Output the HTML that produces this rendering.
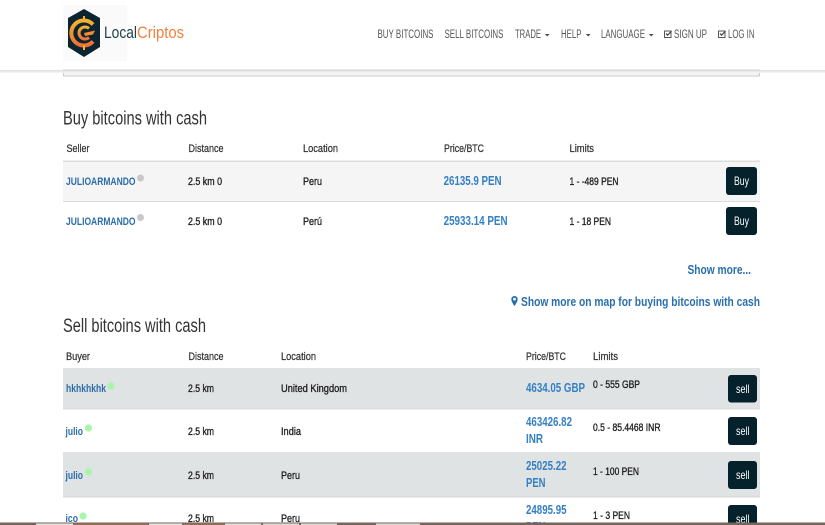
<!DOCTYPE html>
<html><head><meta charset="utf-8"><title>LocalCriptos</title>
<style>
html,body{margin:0;padding:0;background:#fff;width:825px;height:525px;overflow:hidden}
svg{display:block;font-family:"Liberation Sans",sans-serif}
.n{font-size:11.500px;fill:#555}
.h{font-size:11px;fill:#333;stroke:#333;stroke-width:.25px}
.t{font-size:11px;fill:#222;stroke:#222;stroke-width:.35px}
.l{font-size:11px;font-weight:bold;fill:#2a6da8}
.p{font-size:13px;font-weight:bold;fill:#3580c4}
.m{font-size:13px;font-weight:bold;fill:#2a6fad}
.g{font-size:19px;fill:#333}
.b{font-size:12px;fill:#fff}
</style></head><body>
<svg width="825" height="525" viewBox="0 0 825 525" xmlns="http://www.w3.org/2000/svg">
<defs>
<linearGradient id="sh" x1="0" y1="0" x2="0" y2="1"><stop offset="0" stop-color="#d8d8d8"/><stop offset="1" stop-color="#f7f7f7"/></linearGradient>
<linearGradient id="c" x1="0" y1="0" x2="0" y2="1"><stop offset="0" stop-color="#f8b030"/><stop offset="1" stop-color="#f26f36"/></linearGradient>
</defs>
<rect width="825" height="525" fill="#fff"/>
<!-- top box -->
<rect x="63.500" y="70" width="696" height="6" fill="#f4f4f4" stroke="#ccc"/>
<rect x="0" y="70" width="825" height="3" fill="url(#sh)" opacity=".9"/>
<!-- logo -->
<rect x="63" y="5" width="64" height="56" fill="#fafafa"/>
<path d="M84 9L100 18V47L84 57L68 47V18Z" fill="#0b2530"/>
<path d="M93 24.500A12.500 12.500 0 1 0 93 41.500" fill="none" stroke="url(#c)" stroke-width="4"/>
<path d="M89 28.500A6 6 0 1 0 89 37.500" fill="none" stroke="url(#c)" stroke-width="3"/>
<path d="M84 33L95 30.500L93 34.500L85 36Z" fill="#f58a32"/>
<rect x="83" y="16" width="2" height="6" fill="#f8b030"/>
<rect x="83" y="45" width="2" height="5" fill="#f8b030"/>
<text x="104" y="38" font-size="17" fill="#24404a" textLength="33" lengthAdjust="spacingAndGlyphs">Local</text>
<text x="137" y="38" font-size="17" fill="#f47f3e" textLength="47" lengthAdjust="spacingAndGlyphs">Criptos</text>
<!-- nav -->
<text class="n" x="377.500" y="38" textLength="56" lengthAdjust="spacingAndGlyphs">BUY BITCOINS</text>
<text class="n" x="444.500" y="38" textLength="59" lengthAdjust="spacingAndGlyphs">SELL BITCOINS</text>
<text class="n" x="515" y="38" textLength="26" lengthAdjust="spacingAndGlyphs">TRADE</text>
<path d="M545 34h4.500l-2.250 2.500z" fill="#444"/>
<text class="n" x="561" y="38" textLength="20.500" lengthAdjust="spacingAndGlyphs">HELP</text>
<path d="M586 34h4.500l-2.250 2.500z" fill="#444"/>
<text class="n" x="601" y="38" textLength="44" lengthAdjust="spacingAndGlyphs">LANGUAGE</text>
<path d="M649 34h4.500l-2.250 2.500z" fill="#444"/>
<rect x="664.500" y="31" width="6.500" height="6.500" fill="none" stroke="#555" stroke-width="1"/>
<path d="M666 33.500l1.500 1.700 4-4" fill="none" stroke="#444" stroke-width="1.200"/>
<text class="n" x="674" y="38" textLength="33" lengthAdjust="spacingAndGlyphs">SIGN UP</text>
<rect x="718.500" y="31" width="6.500" height="6.500" fill="none" stroke="#555" stroke-width="1"/>
<path d="M720 33.500l1.500 1.700 4-4" fill="none" stroke="#444" stroke-width="1.200"/>
<text class="n" x="728" y="38" textLength="26.500" lengthAdjust="spacingAndGlyphs">LOG IN</text>

<!-- buy -->
<text class="g" x="63" y="124.500" textLength="144" lengthAdjust="spacingAndGlyphs">Buy bitcoins with cash</text>
<text class="h" x="66.500" y="152" textLength="23" lengthAdjust="spacingAndGlyphs">Seller</text>
<text class="h" x="188.500" y="152" textLength="35" lengthAdjust="spacingAndGlyphs">Distance</text>
<text class="h" x="303" y="152" textLength="35" lengthAdjust="spacingAndGlyphs">Location</text>
<text class="h" x="444" y="152" textLength="40" lengthAdjust="spacingAndGlyphs">Price/BTC</text>
<text class="h" x="569.500" y="152" textLength="24.500" lengthAdjust="spacingAndGlyphs">Limits</text>
<rect x="63" y="162" width="697" height="39" fill="#f5f5f5"/>
<rect x="63" y="160.500" width="697" height="1.500" fill="#ddd"/>
<rect x="63" y="201" width="697" height="1" fill="#ddd"/>

<text class="l" x="66" y="185" textLength="69.500" lengthAdjust="spacingAndGlyphs">JULIOARMANDO</text>
<circle cx="140.500" cy="178" r="3.500" fill="#c8c8c8"/>
<text class="t" x="188" y="185" textLength="34" lengthAdjust="spacingAndGlyphs">2.5 km 0</text>
<text class="t" x="303" y="185" textLength="19" lengthAdjust="spacingAndGlyphs">Peru</text>
<text class="p" x="443.600" y="185" textLength="58" lengthAdjust="spacingAndGlyphs">26135.9 PEN</text>
<text class="t" x="569.500" y="185" textLength="49" lengthAdjust="spacingAndGlyphs">1 - -489 PEN</text>
<rect x="726" y="167" width="31" height="28" rx="3" fill="#04212c"/>
<text class="b" x="734" y="185" textLength="15" lengthAdjust="spacingAndGlyphs">Buy</text>

<text class="l" x="66" y="225" textLength="69.500" lengthAdjust="spacingAndGlyphs">JULIOARMANDO</text>
<circle cx="140.500" cy="217.500" r="3.500" fill="#c8c8c8"/>
<text class="t" x="188" y="225" textLength="34" lengthAdjust="spacingAndGlyphs">2.5 km 0</text>
<text class="t" x="303" y="225" textLength="19" lengthAdjust="spacingAndGlyphs">Perú</text>
<text class="p" x="443.600" y="225" textLength="64" lengthAdjust="spacingAndGlyphs">25933.14 PEN</text>
<text class="t" x="569.500" y="225" textLength="41.500" lengthAdjust="spacingAndGlyphs">1 - 18 PEN</text>
<rect x="726" y="207" width="31" height="28" rx="3" fill="#04212c"/>
<text class="b" x="734" y="225" textLength="15" lengthAdjust="spacingAndGlyphs">Buy</text>

<text class="m" x="687.500" y="274" textLength="63.500" lengthAdjust="spacingAndGlyphs">Show more...</text>
<path d="M514.500 296a3.200 3.200 0 0 0-3.200 3.200c0 2.600 3.200 6.800 3.200 6.800s3.200-4.200 3.200-6.800a3.200 3.200 0 0 0-3.200-3.200zm0 1.700a1.400 1.400 0 1 1 0 2.800a1.400 1.400 0 0 1 0-2.800z" fill="#2a6fad" fill-rule="evenodd"/>
<text class="m" x="521" y="306" textLength="239" lengthAdjust="spacingAndGlyphs">Show more on map for buying bitcoins with cash</text>

<!-- sell -->
<text class="g" x="63" y="332" textLength="143" lengthAdjust="spacingAndGlyphs">Sell bitcoins with cash</text>
<text class="h" x="66" y="360" textLength="24" lengthAdjust="spacingAndGlyphs">Buyer</text>
<text class="h" x="188.500" y="360" textLength="35" lengthAdjust="spacingAndGlyphs">Distance</text>
<text class="h" x="281" y="360" textLength="35" lengthAdjust="spacingAndGlyphs">Location</text>
<text class="h" x="526" y="360" textLength="40" lengthAdjust="spacingAndGlyphs">Price/BTC</text>
<text class="h" x="593" y="360" textLength="25" lengthAdjust="spacingAndGlyphs">Limits</text>
<rect x="63" y="368" width="697" height="41" fill="#e0e3e4"/>
<rect x="63" y="452" width="697" height="45" fill="#e0e3e4"/>
<rect x="63" y="408.500" width="697" height="1" fill="#ddd"/>
<rect x="63" y="496.500" width="697" height="1" fill="#d4d4d4"/>

<text class="l" x="66" y="392" textLength="40" lengthAdjust="spacingAndGlyphs">hkhkhkhk</text>
<circle cx="111" cy="386" r="3.600" fill="#a9f5a9"/>
<text class="t" x="188" y="392" textLength="26" lengthAdjust="spacingAndGlyphs">2.5 km</text>
<text class="t" x="281" y="392" textLength="66" lengthAdjust="spacingAndGlyphs">United Kingdom</text>
<text class="p" x="526" y="392" textLength="59" lengthAdjust="spacingAndGlyphs">4634.05 GBP</text>
<text class="t" x="593" y="388" textLength="47" lengthAdjust="spacingAndGlyphs">0 - 555 GBP</text>
<rect x="728" y="375" width="29" height="27.500" rx="3" fill="#04212c"/>
<text class="b" x="736" y="393" textLength="13.500" lengthAdjust="spacingAndGlyphs">sell</text>

<text class="l" x="65.500" y="435" textLength="17.500" lengthAdjust="spacingAndGlyphs">julio</text>
<circle cx="88.500" cy="428" r="3.600" fill="#a9f5a9"/>
<text class="t" x="188" y="435" textLength="26" lengthAdjust="spacingAndGlyphs">2.5 km</text>
<text class="t" x="281" y="435" textLength="20" lengthAdjust="spacingAndGlyphs">India</text>
<text class="p" x="526" y="426" textLength="46" lengthAdjust="spacingAndGlyphs">463426.82</text>
<text class="p" x="526" y="443" textLength="17" lengthAdjust="spacingAndGlyphs">INR</text>
<text class="t" x="593" y="431" textLength="67.500" lengthAdjust="spacingAndGlyphs">0.5 - 85.4468 INR</text>
<rect x="728" y="417" width="29" height="28" rx="3" fill="#04212c"/>
<text class="b" x="736" y="435" textLength="13.500" lengthAdjust="spacingAndGlyphs">sell</text>

<text class="l" x="65.500" y="479" textLength="17.500" lengthAdjust="spacingAndGlyphs">julio</text>
<circle cx="88.500" cy="472" r="3.600" fill="#a9f5a9"/>
<text class="t" x="188" y="479" textLength="26" lengthAdjust="spacingAndGlyphs">2.5 km</text>
<text class="t" x="281" y="479" textLength="19" lengthAdjust="spacingAndGlyphs">Peru</text>
<text class="p" x="526" y="470" textLength="40.500" lengthAdjust="spacingAndGlyphs">25025.22</text>
<text class="p" x="526" y="487" textLength="19.500" lengthAdjust="spacingAndGlyphs">PEN</text>
<text class="t" x="593" y="475" textLength="46" lengthAdjust="spacingAndGlyphs">1 - 100 PEN</text>
<rect x="728" y="461" width="29" height="28" rx="3" fill="#04212c"/>
<text class="b" x="736" y="479" textLength="13.500" lengthAdjust="spacingAndGlyphs">sell</text>

<text class="l" x="65.500" y="522" textLength="12.500" lengthAdjust="spacingAndGlyphs">ico</text>
<circle cx="83" cy="516" r="3.600" fill="#a9f5a9"/>
<text class="t" x="188" y="522" textLength="26" lengthAdjust="spacingAndGlyphs">2.5 km</text>
<text class="t" x="281" y="522" textLength="19" lengthAdjust="spacingAndGlyphs">Peru</text>
<text class="p" x="526" y="514" textLength="40.500" lengthAdjust="spacingAndGlyphs">24895.95</text>
<text class="p" x="526" y="531" textLength="19.500" lengthAdjust="spacingAndGlyphs">PEN</text>
<text class="t" x="593" y="519" textLength="37" lengthAdjust="spacingAndGlyphs">1 - 3 PEN</text>
<rect x="728" y="505" width="29" height="28" rx="3" fill="#04212c"/>
<text class="b" x="736" y="523" textLength="13.500" lengthAdjust="spacingAndGlyphs">sell</text>

<!-- bottom strip -->
<rect x="0" y="522.500" width="825" height="2.500" fill="#75665c"/>
<rect x="36" y="523.500" width="37" height="1.500" fill="#e8e4e0"/>
<rect x="73" y="523.500" width="75" height="1.500" fill="#9a6f58"/>
<rect x="149" y="523.500" width="33" height="1.500" fill="#ece8e4"/>
<rect x="184" y="523.500" width="40" height="1.500" fill="#9a6f58"/>
<rect x="225" y="523.500" width="36" height="1.500" fill="#e8e4e0"/>
<rect x="263" y="523.500" width="36" height="1.500" fill="#e0dcd8"/>
<rect x="301" y="523.500" width="36" height="1.500" fill="#e0dcd8"/>
<rect x="376" y="523.500" width="44" height="1.500" fill="#e0dcd8"/>
</svg>
</body></html>
